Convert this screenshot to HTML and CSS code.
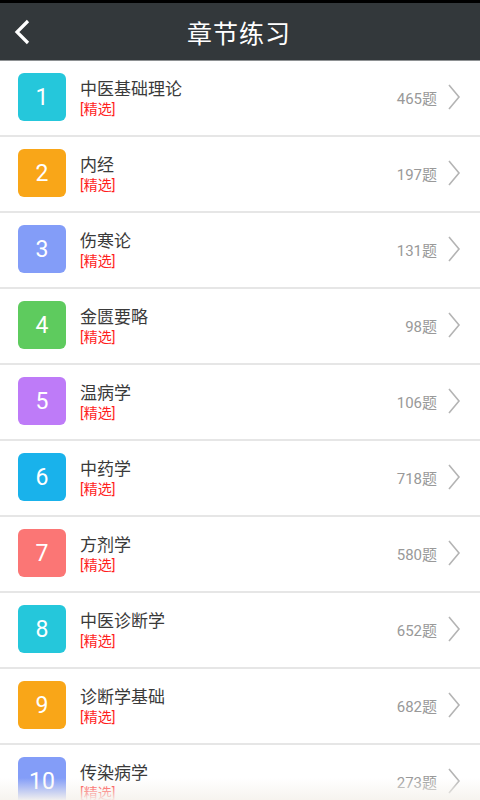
FILE: index.html
```html
<!DOCTYPE html>
<html>
<head>
    <meta charset="UTF-8">
    <title>章节练习</title>
    <meta name="viewport" content="width=device-width, initial-scale=1.0">
    <link rel="stylesheet" href="styles.css">
</head>
<body>
    <div class="status-bar"></div>
    <div class="header">
        <div class="back-button">
            <svg viewBox="0 0 20 28" width="20" height="28">
                <polyline points="16,3 5,14 16,25" fill="none" stroke="#fff" stroke-width="3.2" />
            </svg>
        </div>
        <div class="title">章节练习</div>
    </div>
    <div class="chapter-list">
        <div class="chapter-row">
            <div class="chapter-num c-cyan">1</div>
            <div class="chapter-info"><div class="chapter-name">中医基础理论</div><div class="chapter-tag">[精选]</div></div>
            <div class="chapter-count">465题</div>
            <svg class="chevron" viewBox="0 0 14 26" width="14" height="26"><polyline points="2,1 12,13 2,25" fill="none" stroke="#b4b4b4" stroke-width="1.6" /></svg>
        </div>
        <div class="chapter-row">
            <div class="chapter-num c-orange">2</div>
            <div class="chapter-info"><div class="chapter-name">内经</div><div class="chapter-tag">[精选]</div></div>
            <div class="chapter-count">197题</div>
            <svg class="chevron" viewBox="0 0 14 26" width="14" height="26"><polyline points="2,1 12,13 2,25" fill="none" stroke="#b4b4b4" stroke-width="1.6" /></svg>
        </div>
        <div class="chapter-row">
            <div class="chapter-num c-blue">3</div>
            <div class="chapter-info"><div class="chapter-name">伤寒论</div><div class="chapter-tag">[精选]</div></div>
            <div class="chapter-count">131题</div>
            <svg class="chevron" viewBox="0 0 14 26" width="14" height="26"><polyline points="2,1 12,13 2,25" fill="none" stroke="#b4b4b4" stroke-width="1.6" /></svg>
        </div>
        <div class="chapter-row">
            <div class="chapter-num c-green">4</div>
            <div class="chapter-info"><div class="chapter-name">金匮要略</div><div class="chapter-tag">[精选]</div></div>
            <div class="chapter-count">98题</div>
            <svg class="chevron" viewBox="0 0 14 26" width="14" height="26"><polyline points="2,1 12,13 2,25" fill="none" stroke="#b4b4b4" stroke-width="1.6" /></svg>
        </div>
        <div class="chapter-row">
            <div class="chapter-num c-purple">5</div>
            <div class="chapter-info"><div class="chapter-name">温病学</div><div class="chapter-tag">[精选]</div></div>
            <div class="chapter-count">106题</div>
            <svg class="chevron" viewBox="0 0 14 26" width="14" height="26"><polyline points="2,1 12,13 2,25" fill="none" stroke="#b4b4b4" stroke-width="1.6" /></svg>
        </div>
        <div class="chapter-row">
            <div class="chapter-num c-sky">6</div>
            <div class="chapter-info"><div class="chapter-name">中药学</div><div class="chapter-tag">[精选]</div></div>
            <div class="chapter-count">718题</div>
            <svg class="chevron" viewBox="0 0 14 26" width="14" height="26"><polyline points="2,1 12,13 2,25" fill="none" stroke="#b4b4b4" stroke-width="1.6" /></svg>
        </div>
        <div class="chapter-row">
            <div class="chapter-num c-red">7</div>
            <div class="chapter-info"><div class="chapter-name">方剂学</div><div class="chapter-tag">[精选]</div></div>
            <div class="chapter-count">580题</div>
            <svg class="chevron" viewBox="0 0 14 26" width="14" height="26"><polyline points="2,1 12,13 2,25" fill="none" stroke="#b4b4b4" stroke-width="1.6" /></svg>
        </div>
        <div class="chapter-row">
            <div class="chapter-num c-cyan">8</div>
            <div class="chapter-info"><div class="chapter-name">中医诊断学</div><div class="chapter-tag">[精选]</div></div>
            <div class="chapter-count">652题</div>
            <svg class="chevron" viewBox="0 0 14 26" width="14" height="26"><polyline points="2,1 12,13 2,25" fill="none" stroke="#b4b4b4" stroke-width="1.6" /></svg>
        </div>
        <div class="chapter-row">
            <div class="chapter-num c-orange">9</div>
            <div class="chapter-info"><div class="chapter-name">诊断学基础</div><div class="chapter-tag">[精选]</div></div>
            <div class="chapter-count">682题</div>
            <svg class="chevron" viewBox="0 0 14 26" width="14" height="26"><polyline points="2,1 12,13 2,25" fill="none" stroke="#b4b4b4" stroke-width="1.6" /></svg>
        </div>
        <div class="chapter-row">
            <div class="chapter-num c-blue">10</div>
            <div class="chapter-info"><div class="chapter-name">传染病学</div><div class="chapter-tag">[精选]</div></div>
            <div class="chapter-count">273题</div>
            <svg class="chevron" viewBox="0 0 14 26" width="14" height="26"><polyline points="2,1 12,13 2,25" fill="none" stroke="#b4b4b4" stroke-width="1.6" /></svg>
        </div>
    </div>
    <div class="bottom-fade"></div>
</body>
</html>
```

FILE: styles.css
```css
body {
    margin: 0px;
    padding: 0px;
    width: 480px;
    height: 800px;
    overflow: hidden;
    background-color: #fff;
    font-family: Roboto, "Noto Sans CJK SC", sans-serif;
    position: relative;
}

.status-bar {
    height: 3px;
    background-color: #000;
}

.header {
    height: 57px;
    background-color: #33383b;
    border-bottom: 1px solid #8e9193;
    display: flex;
    align-items: center;
    justify-content: center;
    position: relative;
}

.back-button {
    position: absolute;
    left: 12px;
    top: 15px;
}

.back-button svg {
    display: block;
}

.title {
    color: #fff;
    font-size: 25px;
    letter-spacing: 1px;
    padding-right: 2px;
}

.chapter-row {
    height: 74px;
    border-bottom: 2px solid #e6e6e6;
    display: flex;
    align-items: center;
    padding-left: 18px;
    padding-right: 19px;
}

.chapter-num {
    width: 48px;
    height: 48px;
    border-radius: 6px;
    color: #fff;
    font-size: 23px;
    display: flex;
    align-items: center;
    justify-content: center;
    margin-top: -2px;
}

.c-cyan { background-color: #25c7db; }
.c-orange { background-color: #f9a618; }
.c-blue { background-color: #839df8; }
.c-green { background-color: #5ecb5e; }
.c-purple { background-color: #be7bf8; }
.c-sky { background-color: #19b2eb; }
.c-red { background-color: #fb7675; }

.chapter-info {
    flex: 1;
    margin-left: 14px;
    margin-top: 0px;
}

.chapter-name {
    color: #3a3a3a;
    font-size: 17px;
    line-height: 22px;
}

.chapter-tag {
    color: #ff1e1e;
    font-size: 14px;
    line-height: 18px;
}

.chapter-count {
    color: #999;
    font-size: 15px;
    margin-right: 10px;
    margin-top: -2px;
}

.chevron {
    display: block;
    margin-top: -2px;
}

.bottom-fade {
    position: absolute;
    left: 0px;
    right: 0px;
    bottom: 0px;
    height: 22px;
    background: linear-gradient(to bottom, rgba(250, 248, 245, 0), rgba(246, 243, 238, 0.95));
}
```
